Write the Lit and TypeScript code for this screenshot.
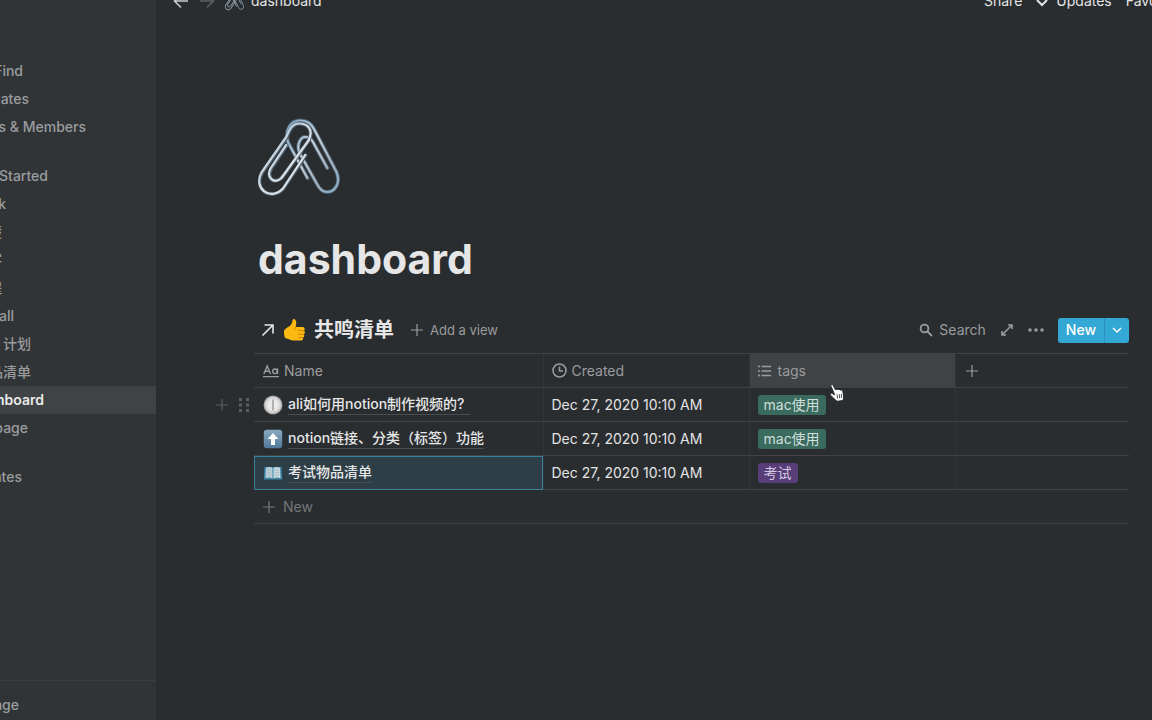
import { LitElement, html, css } from "lit";
import { customElement } from "lit/decorators.js";

interface NavItem {
  text: string;
  end: number;
  active?: boolean;
}

interface Row {
  icon: string;
  name: string;
  created: string;
  tag: string;
  color: string;
  trail?: boolean;
  selected?: boolean;
  hovered?: boolean;
}

// "end" is how far the label of a partly scrolled-out item reaches into the sidebar.
const groups: NavItem[][] = [
  [
    { text: "Find", end: 23 },
    { text: "dates", end: 29 },
    { text: "gs & Members", end: 86 },
  ],
  [
    { text: "Started", end: 48 },
    { text: "k", end: 6 },
    { text: "楚", end: 2 },
    { text: "客", end: 2 },
    { text: "程", end: 2 },
    { text: "all", end: 14 },
    { text: "计划", end: 31 },
    { text: "品清单", end: 31 },
    { text: "hboard", end: 44, active: true },
    { text: "page", end: 28 },
  ],
  [{ text: "ates", end: 22 }],
];

const rows: Row[] = [
  { icon: "clock", name: "ali如何用notion制作视频的?", created: "Dec 27, 2020 10:10 AM", tag: "mac使用", color: "green", trail: true, hovered: true },
  { icon: "up", name: "notion链接、分类（标签）功能", created: "Dec 27, 2020 10:10 AM", tag: "mac使用", color: "green" },
  { icon: "book", name: "考试物品清单", created: "Dec 27, 2020 10:10 AM", tag: "考试", color: "purple", selected: true },
];

const plus = html`<svg viewBox="0 0 14 14" width="14" height="14" aria-hidden="true">
  <path d="M7 1v12M1 7h12" stroke="currentColor" stroke-width="1.2" fill="none" />
</svg>`;

const paperclips = (size: number) => html`<svg viewBox="0 0 82 80" width=${size} height=${size} fill="none" stroke-linecap="round" stroke-linejoin="round" aria-hidden="true">
  <defs>
    <linearGradient id="steel" x1="0" y1="0" x2="1" y2="1">
      <stop offset="0" stop-color="#7fa6c6" />
      <stop offset=".4" stop-color="#c3d0da" />
      <stop offset=".7" stop-color="#a5b4c0" />
      <stop offset="1" stop-color="#86abc8" />
    </linearGradient>
    <linearGradient id="chrome" x1="0" y1="0" x2="1" y2="1">
      <stop offset="0" stop-color="#9dbad0" />
      <stop offset=".5" stop-color="#d3dde4" />
      <stop offset="1" stop-color="#e6edf0" />
    </linearGradient>
  </defs>
  <path d="M49.700 60.300L30.500 25C26 12 33 2.500 42 2.500C50 2.500 53 6 56 11L78.500 54C83 65 77 74 69 74C64 74 61 70 59 66L41.500 35C38 26 43 19 47 19C51 19 53 20 55 24L69.300 50" stroke="#50606d" stroke-width="3.800" />
  <path d="M49.200 59.800L30 24.500C26 12 33 2.500 42 2.500C50 2.500 53 6 56 11L78.500 54C83 65 77 74 69 74C64 74 61 70 59 66L41.500 35C38 26 43 19 47 19C51 19 53 20 55 24L69.300 50" stroke="url(#steel)" stroke-width="2.200" />
  <path d="M28.700 27.300L13 51C8 60 16 66 23 60.500L26 57L50.500 23C56 12 50 5.500 41 5.500C34 5.500 31 13 29 19L4 55C-5 70 12 84 25 71L47.700 37.300" stroke="#50606d" stroke-width="3.800" />
  <path d="M28.200 26.800L12.500 50.500C8 60 16 66 23 60.500L26 56.500L50.500 22.500C56 12 50 5.500 41 5.500C34 5.500 31 12 28.500 18.500L3.500 54.500C-5 70 12 84 25 70.500L47.200 37" stroke="url(#chrome)" stroke-width="2.200" />
</svg>`;

const rowIcons: Record<string, unknown> = {
  clock: html`<svg viewBox="0 0 20 20" width="20" height="20" aria-hidden="true">
    <defs><radialGradient id="dial"><stop offset=".5" stop-color="#eceae9" /><stop offset=".8" stop-color="#d0cfcf" /><stop offset="1" stop-color="#8f9192" /></radialGradient></defs>
    <circle cx="10" cy="10" r="9.5" fill="url(#dial)" />
    <path d="M10 4.500v11" stroke="#8d8b8a" stroke-width="1.200" />
  </svg>`,
  up: html`<svg viewBox="0 0 20 20" width="20" height="20" aria-hidden="true">
    <defs><linearGradient id="tile" x1="0" y1="0" x2="0" y2="1"><stop offset="0" stop-color="#88a9bf" /><stop offset="1" stop-color="#52799a" /></linearGradient></defs>
    <rect x=".8" y=".8" width="18.400" height="18.400" rx="3" fill="url(#tile)" />
    <path d="M10 4l5.400 6H12v6H8v-6H4.600z" fill="#fff" />
  </svg>`,
  book: html`<svg viewBox="0 0 20 20" width="20" height="20" aria-hidden="true">
    <path d="M1.500 4h17l.7 12.500H.8z" fill="#3c88a8" />
    <path d="M3 4.500c3-1 5.500-.8 6.500.6v10.300c-1.600-1.100-4-1.200-7-.4z" fill="#b9ccd6" />
    <path d="M17 4.500c-3-1-5.500-.8-6.500.6v10.300c1.600-1.100 4-1.200 7-.4z" fill="#c6d6de" />
    <path d="M4 7h4M4 9.500h4M4 12h4M12 7h4M12 9.500h4M12 12h4" stroke="#9db6c3" stroke-width=".7" />
  </svg>`,
};

@customElement("app-root")
export class AppRoot extends LitElement {
  static styles = css`
    :host {
      display: flex;
      height: 100vh;
      overflow: hidden;
      background: #2a2d30;
      color: #e3e4e4;
      font: 14px/20px Inter, "Noto Sans CJK SC", sans-serif;
      --line: #404346;
      --muted: #9a9c9e;
    }
    * { box-sizing: border-box; }
    svg { display: block; flex: none; }
    button {
      display: flex;
      align-items: center;
      padding: 0;
      border: 0;
      background: none;
      color: inherit;
      font: inherit;
      white-space: nowrap;
    }
    a { color: inherit; text-decoration: none; }

    .sidebar {
      flex: none;
      width: 156px;
      display: flex;
      flex-direction: column;
      background: #313437;
      color: var(--muted);
      font-weight: 500;
    }
    .groups {
      flex: 1;
      display: flex;
      flex-direction: column;
      gap: 21px;
      padding-top: 57px;
    }
    .item {
      display: flex;
      align-items: center;
      height: 28px;
    }
    .active { background: #404346; color: #e9eaea; font-weight: 600; }
    .clip {
      display: flex;
      justify-content: flex-end;
      overflow: hidden;
      white-space: nowrap;
    }
    .foot {
      height: 40px;
      padding-top: 10px;
      border-top: 1px solid #3b3e41;
    }

    .main { flex: 1; min-width: 0; }
    .topbar {
      display: flex;
      align-items: center;
      gap: 10px;
      height: 44px;
      margin-top: -21px;
      padding-left: 17px;
      white-space: nowrap;
      overflow: hidden;
    }
    .crumb { display: flex; align-items: center; gap: 7px; flex: 1; }
    .dim { color: #5d6063; }
    .actions { display: flex; gap: 14px; width: 168px; flex: none; }
    .actions button { gap: 8px; }

    .page { padding: 94px 23px 0 98px; }
    .hero { padding-left: 4px; }
    h1 {
      margin: 32px 0 0 4px;
      font-size: 41px;
      line-height: 56px;
      font-weight: 700;
      color: #e6e6e7;
    }
    .toolbar {
      display: flex;
      align-items: center;
      height: 40px;
      margin-top: 23px;
      padding-left: 7px;
      color: var(--muted);
    }
    h2 {
      display: flex;
      align-items: center;
      gap: 8px;
      margin: 0 16px 0 0;
      font-size: 20px;
      line-height: 28px;
      font-weight: 600;
      color: #e6e6e7;
      white-space: nowrap;
    }
    .grow { flex: 1; }
    .toolbar button { gap: 6px; }
    .tools { display: flex; align-items: center; gap: 14px; }
    .small { font-size: 13px; }
    .split {
      display: flex;
      height: 25px;
      border-radius: 3px;
      overflow: hidden;
      background: #34a8d5;
      color: #fff;
      font-weight: 500;
    }
    .split button { padding: 0 8px; }
    .split button + button { padding: 0 7px; border-left: 1px solid #2d92bb; }

    table {
      width: 100%;
      margin-top: 3px;
      border-collapse: collapse;
      table-layout: fixed;
    }
    tr { height: 34px; }
    th, td {
      padding: 0 8px;
      border-top: 1px solid var(--line);
      border-bottom: 1px solid var(--line);
      text-align: left;
      font-weight: 400;
      white-space: nowrap;
    }
    th:first-child, td:first-child, th:last-child { padding-left: 9px; }
    th + th, td + td { border-left: 1px solid #323538; }
    th { color: var(--muted); }
    .name { width: 289px; }
    .col { width: 206px; }
    .hot { background: #404346; }
    .cell { display: flex; align-items: center; gap: 5px; position: relative; }
    .title {
      font-weight: 500;
      color: #e6e7e7;
      border-bottom: 1px solid #4a4d50;
    }
    .trail { padding-right: 6px; }
    .selected { background: #2e3e47; outline: 1px solid #38809c; outline-offset: -1px; }
    .handle {
      position: absolute;
      left: -48px;
      display: flex;
      align-items: center;
      gap: 10px;
      color: #5b5e61;
    }
    .tag {
      display: inline-block;
      padding: 0 6px;
      border-radius: 3px;
      vertical-align: middle;
    }
    .green { background: #3b6b5e; color: #cfdfda; }
    .purple { background: #573e78; color: #d5c9e4; }
    .add {
      width: 100%;
      height: 34px;
      gap: 7px;
      padding-left: 8px;
      border-bottom: 1px solid var(--line);
      color: #747779;
    }
    .cursor { position: absolute; left: 829px; top: 383px; }
  `;

  render() {
    return html`
      <nav class="sidebar" aria-label="Workspace">
        <div class="groups">
          ${groups.map((g) => html`<div class="group">${g.map((i) => this.item(i))}</div>`)}
        </div>
        <div class="foot">${this.item({ text: "age", end: 19 })}</div>
      </nav>
      <main class="main">
        <header class="topbar">
          <button aria-label="Back">
            <svg width="16" height="16" viewBox="0 0 16 16" fill="none" stroke="#c9cbcc" stroke-width="1.6"><path d="M15 8H2M8 1.500L1.500 8L8 14.500" /></svg>
          </button>
          <button class="dim" aria-label="Forward">
            <svg width="16" height="16" viewBox="0 0 16 16" fill="none" stroke="currentColor" stroke-width="1.6"><path d="M1 8h13M8 1.500L14.500 8L8 14.500" /></svg>
          </button>
          <a class="crumb" href="#dashboard">${paperclips(19)}<span>dashboard</span></a>
          <div class="actions">
            <button>Share</button>
            <button>
              <svg width="12" height="12" viewBox="0 0 12 12" fill="none" stroke="currentColor" stroke-width="2"><path d="M1 5l5 5l5-5" /></svg>
              Updates
            </button>
            <button>Favorite</button>
          </div>
        </header>
        <section class="page">
          <div class="hero">${paperclips(82)}</div>
          <h1>dashboard</h1>
          <div class="toolbar">
            <h2>
              <svg width="14" height="14" viewBox="0 0 14 14" fill="none" stroke="currentColor" stroke-width="1.6"><path d="M1.500 12.500L12 2M3.500 2H12v8.500" /></svg>
              <svg width="23" height="24" viewBox="0 0 23 24">
                <path d="M1 13.500C1 11.500 4 9.500 6.500 8.200C8.500 6.800 9.300 4.500 9.500 2.500C9.700.8 11.200.5 12.300 1.700C13.800 3.300 13.300 6 12.700 9H19.500C21.800 9 22.400 11.600 20.800 12.600C22.500 13.500 22.200 15.600 20.700 16.200C21.900 17.300 21.400 19.200 19.900 19.500C20.600 20.800 19.800 22.500 17.800 22.500H10.500C7.800 22.500 6.500 20.600 3.500 20.400C1.300 20.200 1 16.500 1 13.500Z" fill="#fbb912" />
                <path d="M20.800 12.600h-5.300M20.700 16.200h-5.200M19.900 19.500h-4.400M13 9c-.8.500-1.700 1.500-1.900 2.500" stroke="#c98206" stroke-width=".9" fill="none" stroke-linecap="round" />
              </svg>
              <span>共鸣清单</span>
            </h2>
            <button class="small">${plus}Add a view</button>
            <span class="grow"></span>
            <div class="tools">
              <button>
                <svg width="14" height="14" viewBox="0 0 14 14" fill="none" stroke="currentColor" stroke-width="1.8"><circle cx="5.500" cy="5.500" r="3.900" /><path d="M8.500 8.500L13 13" /></svg>
                Search
              </button>
              <button aria-label="Open as page">
                <svg width="14" height="14" viewBox="0 0 14 14" fill="none" stroke="currentColor" stroke-width="1.6"><path d="M8 2h4v4M12 2L8 6M6 12H2V8M2 12l4-4M12 2L2 12" /></svg>
              </button>
              <button aria-label="More">
                <svg width="16" height="4" viewBox="0 0 16 4" fill="currentColor"><circle cx="2" cy="2" r="1.800" /><circle cx="8" cy="2" r="1.800" /><circle cx="14" cy="2" r="1.800" /></svg>
              </button>
              <div class="split">
                <button>New</button>
                <button aria-label="Templates">
                  <svg width="10" height="10" viewBox="0 0 10 10" fill="none" stroke="currentColor" stroke-width="1.5"><path d="M1 3l4 4l4-4" /></svg>
                </button>
              </div>
            </div>
          </div>
          <table>
            <thead>
              <tr>
                <th class="name">
                  <div class="cell">
                    <svg width="16" height="14" viewBox="0 0 16 14" fill="none" stroke="currentColor" stroke-width="1.4">
                      <path d="M.8 10L4.200 2L7.600 10M2 7.300h4.400M14.500 4.500V10M0 12.600h16" /><circle cx="12" cy="7.300" r="2.300" />
                    </svg>
                    Name
                  </div>
                </th>
                <th class="col">
                  <div class="cell">
                    <svg width="15" height="15" viewBox="0 0 15 15" fill="none" stroke="currentColor" stroke-width="1.500"><circle cx="7.500" cy="7.500" r="6.500" /><path d="M7.500 3.500v4.500h3.500" /></svg>
                    Created
                  </div>
                </th>
                <th class="col hot">
                  <div class="cell">
                    <svg width="15" height="12" viewBox="0 0 15 12" fill="none" stroke="currentColor" stroke-width="1.500"><path d="M3.500 1.500h9.500M3.500 6h9.500M3.500 10.500h9.500M0 1.500h2M0 6h2M0 10.500h2" /></svg>
                    tags
                  </div>
                </th>
                <th><button aria-label="Add column">${plus}</button></th>
              </tr>
            </thead>
            <tbody>
              ${rows.map((r) => this.row(r))}
            </tbody>
          </table>
          <button class="add">${plus}New</button>
        </section>
      </main>
      <svg class="cursor" width="16" height="19" viewBox="0 0 16 19" aria-hidden="true">
        <path d="M4.800 9.500L2 3.200C1.400 1.500 3.200.8 4 2.300L6.600 7C7.200 6 8.500 6 9 6.900C9.800 6.100 11 6.300 11.400 7.200C12.300 6.700 13.400 7.200 13.700 8.300L14.500 12C14.800 14 14.500 15.500 14 17.500L8 18.300C6.500 16.500 4 15 1.700 12.200C.6 10.700 2.200 9.500 3.400 10.600L5.400 12Z" fill="#fff" stroke="#202224" stroke-width=".9" />
        <path d="M8 11.500l.6 4M10.200 11.200l.5 4M12.300 11l.3 3.800" stroke="#333" stroke-width=".9" />
      </svg>
    `;
  }

  private item(i: NavItem) {
    return html`<a class="item ${i.active ? "active" : ""}" href="#"><span class="clip" style="width:${i.end}px"><span>${i.text}</span></span></a>`;
  }

  private row(r: Row) {
    return html`<tr>
      <td class=${r.selected ? "selected" : ""}>
        <div class="cell">
          ${r.hovered
            ? html`<div class="handle">
                <button aria-label="Add row">${plus}</button>
                <svg width="10" height="14" viewBox="0 0 10 14" fill="currentColor"><path d="M0 0h3v3H0zM7 0h3v3H7zM0 5.500h3v3H0zM7 5.500h3v3H7zM0 11h3v3H0zM7 11h3v3H7z" /></svg>
              </div>`
            : ""}
          ${rowIcons[r.icon]}<a class="title ${r.trail ? "trail" : ""}" href="#">${r.name}</a>
        </div>
      </td>
      <td>${r.created}</td>
      <td><span class="tag ${r.color}">${r.tag}</span></td>
      <td></td>
    </tr>`;
  }
}
